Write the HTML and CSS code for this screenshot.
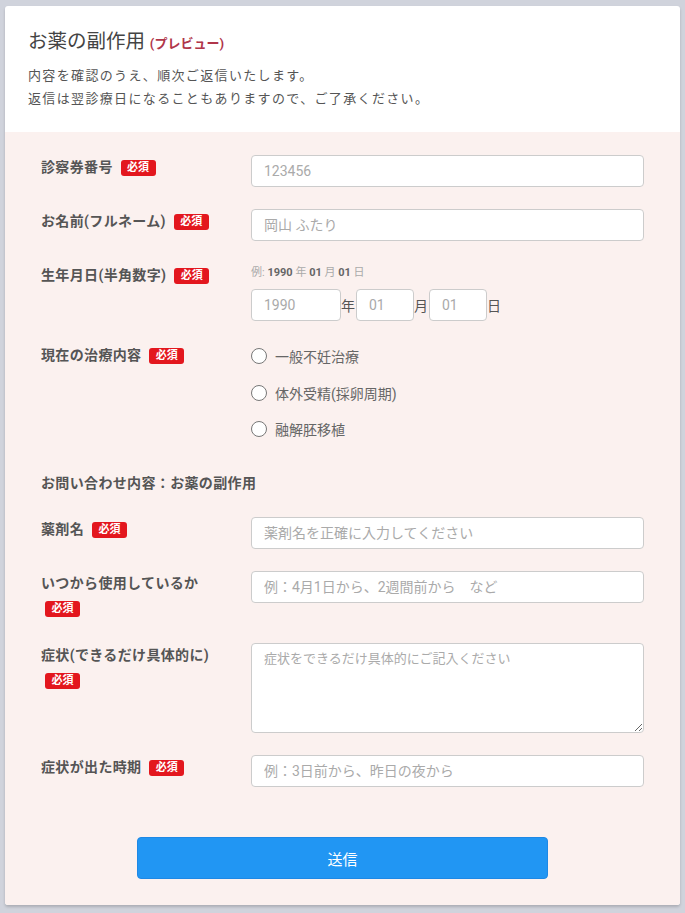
FILE: index.html
```html
<!DOCTYPE html>
<html lang="ja">
<head>
<meta charset="utf-8">
<title>お薬の副作用</title>
<link rel="stylesheet" href="styles.css">
</head>
<body>
<div class="card">
  <header class="head">
    <h1 class="title">お薬の副作用 <span class="preview">(プレビュー)</span></h1>
    <p class="lead">内容を確認のうえ、順次ご返信いたします。<br>返信は翌診療日になることもありますので、ご了承ください。</p>
  </header>
  <form class="form">
    <div class="row">
      <div class="label">診察券番号 <span class="req">必須</span></div>
      <div class="field"><input class="input" type="text" placeholder="123456"></div>
    </div>
    <div class="row">
      <div class="label">お名前(フルネーム) <span class="req">必須</span></div>
      <div class="field"><input class="input" type="text" placeholder="岡山 ふたり"></div>
    </div>
    <div class="row">
      <div class="label">生年月日(半角数字) <span class="req">必須</span></div>
      <div class="field">
        <div class="hint">例: <b>1990</b> 年 <b>01</b> 月 <b>01</b> 日</div>
        <div class="date">
          <input class="input year" type="text" placeholder="1990"><span class="unit">年</span>
          <input class="input md" type="text" placeholder="01"><span class="unit">月</span>
          <input class="input md" type="text" placeholder="01"><span class="unit">日</span>
        </div>
      </div>
    </div>
    <div class="row row-radio">
      <div class="label">現在の治療内容 <span class="req">必須</span></div>
      <div class="field radios">
        <label class="radio"><input type="radio" name="t"><span>一般不妊治療</span></label>
        <label class="radio"><input type="radio" name="t"><span>体外受精(採卵周期)</span></label>
        <label class="radio"><input type="radio" name="t"><span>融解胚移植</span></label>
      </div>
    </div>
    <div class="section">お問い合わせ内容：お薬の副作用</div>
    <div class="row">
      <div class="label">薬剤名 <span class="req">必須</span></div>
      <div class="field"><input class="input" type="text" placeholder="薬剤名を正確に入力してください"></div>
    </div>
    <div class="row">
      <div class="label">いつから使用しているか <span class="req">必須</span></div>
      <div class="field"><input class="input" type="text" placeholder="例：4月1日から、2週間前から　など"></div>
    </div>
    <div class="row">
      <div class="label">症状(できるだけ具体的に) <span class="req">必須</span></div>
      <div class="field"><textarea class="textarea" placeholder="症状をできるだけ具体的にご記入ください"></textarea></div>
    </div>
    <div class="row">
      <div class="label">症状が出た時期 <span class="req">必須</span></div>
      <div class="field"><input class="input" type="text" placeholder="例：3日前から、昨日の夜から"></div>
    </div>
    <div class="actions">
      <button class="submit" type="button">送信</button>
    </div>
  </form>
</div>
</body>
</html>
```

FILE: styles.css
```css
* { box-sizing: border-box; }
html, body { margin: 0; padding: 0; }
body {
  background: #d0d3dc;
  font-family: "Roboto", "Noto Sans CJK JP", sans-serif;
  color: #555;
}
.card {
  margin: 6px 5px 8px;
  background: #fff;
  border-radius: 3px;
  box-shadow: 0 2px 3px rgba(0,0,0,0.18);
  overflow: hidden;
}
.head {
  padding: 22px 23px 22px;
}
.title {
  margin: 0;
  font-size: 19.5px;
  line-height: 28px;
  font-weight: normal;
  color: #444;
}
.preview {
  font-size: 13px;
  font-weight: bold;
  color: #b0364a;
}
.lead {
  margin: 6px 0 0;
  font-size: 13px;
  letter-spacing: 1.35px;
  line-height: 23px;
  color: #555;
}
.form {
  background: #fbf1ef;
  padding: 23px 36px 26px;
}
.row {
  display: grid;
  grid-template-columns: 210px 1fr;
  margin-bottom: 22px;
}
.label {
  font-size: 14px;
  font-weight: bold;
  line-height: 25px;
  letter-spacing: 0.35px;
  color: #555;
  padding-right: 25px;
}
.req {
  display: inline-block;
  margin-left: 4px;
  padding: 0 6.5px;
  height: 16px;
  line-height: 16px;
  font-size: 11px;
  font-weight: bold;
  letter-spacing: 0;
  color: #fff;
  background: #e3171e;
  border-radius: 3px;
  vertical-align: 1px;
}
.input {
  display: block;
  width: 100%;
  height: 32px;
  border: 1px solid #ccc;
  border-radius: 4px;
  background: #fff;
  padding: 0 12px;
  font-family: inherit;
  font-size: 14px;
  color: #555;
  outline: none;
}
.input::placeholder, .textarea::placeholder { color: #aaa; }
.hint {
  font-size: 11px;
  line-height: 20px;
  color: #aaa;
  margin-bottom: 6px;
}
.hint b { color: #666; }
.date {
  display: flex;
  align-items: center;
}
.date .input.year { width: 90px; }
.date .input.md { width: 58px; }
.unit {
  font-size: 14px;
  color: #555;
  width: 15px;
}
.row-radio { margin-bottom: 28px; }
.radios {
  display: flex;
  flex-direction: column;
  gap: 10.5px;
}
.radio {
  display: flex;
  align-items: center;
  height: 26px;
  font-size: 14px;
  color: #666;
}
.radio input {
  appearance: none;
  -webkit-appearance: none;
  width: 16px;
  height: 16px;
  margin: 0 8px 0 0;
  border: 1.5px solid #777;
  border-radius: 50%;
  background: #fff;
}
.section {
  font-size: 14px;
  font-weight: bold;
  line-height: 26px;
  letter-spacing: 0.35px;
  color: #555;
  margin-bottom: 21px;
}
.textarea {
  display: block;
  width: 100%;
  height: 90px;
  border: 1px solid #ccc;
  border-radius: 4px;
  background: #fff;
  padding: 4px 12px;
  font-family: inherit;
  font-size: 13px;
  color: #555;
  outline: none;
}
.actions {
  display: flex;
  justify-content: center;
  padding-top: 28px;
}
.submit {
  width: 411px;
  height: 42px;
  background: #2196f3;
  border: 1px solid #1e88e5;
  border-radius: 4px;
  color: #fff;
  font-family: inherit;
  font-size: 15px;
}
```
